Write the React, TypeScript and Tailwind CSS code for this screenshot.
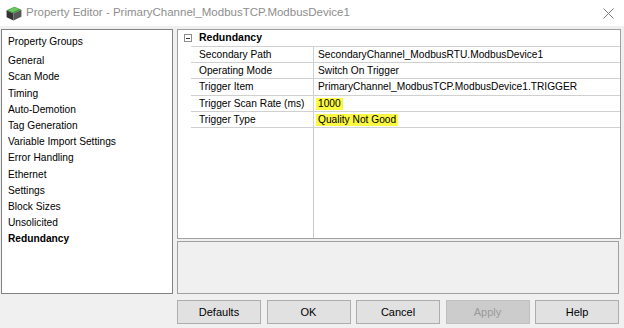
import React from 'react';

const groups = [
  'General',
  'Scan Mode',
  'Timing',
  'Auto-Demotion',
  'Tag Generation',
  'Variable Import Settings',
  'Error Handling',
  'Ethernet',
  'Settings',
  'Block Sizes',
  'Unsolicited',
  'Redundancy',
];

const rows: { name: string; value: string; mark?: boolean }[] = [
  { name: 'Secondary Path', value: 'SecondaryChannel_ModbusRTU.ModbusDevice1' },
  { name: 'Operating Mode', value: 'Switch On Trigger' },
  { name: 'Trigger Item', value: 'PrimaryChannel_ModbusTCP.ModbusDevice1.TRIGGER' },
  { name: 'Trigger Scan Rate (ms)', value: '1000', mark: true },
  { name: 'Trigger Type', value: 'Quality Not Good', mark: true },
];

function AppIcon() {
  return (
    <svg width="18" height="18" viewBox="0 0 17 17">
      <path d="M1.5 6 L9 2.5 L15.5 5.5 L8 9 Z" fill="#3f9a3a" />
      <path d="M1.5 6 L8 9 L8 15.5 L1.5 12.5 Z" fill="#333333" />
      <path d="M8 9 L15.5 5.5 L15.5 12 L8 15.5 Z" fill="#575757" />
      <path d="M2.8 5.8 L9 2.9 L13.5 5 L7.3 7.9 Z" fill="#6cc560" />
    </svg>
  );
}

function Btn({ label, disabled }: { label: string; disabled?: boolean }) {
  return (
    <div
      className={`w-[84px] h-[24px] flex items-center justify-center border text-[11px] ${
        disabled
          ? 'bg-[#cccccc] border-[#bfbfbf] text-[#9a9a9a]'
          : 'bg-[#e1e1e1] border-[#adadad] text-black'
      }`}
    >
      {label}
    </div>
  );
}

export default function App() {
  return (
    <div className="w-[624px] h-[328px] bg-[#f0f0f0] overflow-hidden font-['Liberation_Sans',Arial,sans-serif] text-black">
      {/* title bar */}
      <div className="h-[26px] bg-white flex items-center pl-[5px] pr-[10px]">
        <AppIcon />
        <span className="ml-[3px] text-[11.5px] text-[#8e8e8e]">
          Property Editor - PrimaryChannel_ModbusTCP.ModbusDevice1
        </span>
        <svg className="ml-auto" width="11" height="11" viewBox="0 0 11 11">
          <path d="M0.5 0.5 L10.5 10.5 M10.5 0.5 L0.5 10.5" stroke="#7a7a7a" strokeWidth="1" />
        </svg>
      </div>

      <div className="flex pt-[3px] pl-[1px]">
        {/* left: property groups */}
        <div className="w-[172px] h-[265px] bg-white border border-[#828282] pl-[6px] pt-[4px] text-[10.2px]">
          <div className="leading-[16.2px]">Property Groups</div>
          <div className="mt-[3px]">
            {groups.map(g => (
              <div key={g} className={`leading-[16.2px] ${g === 'Redundancy' ? 'font-bold' : ''}`}>
                {g}
              </div>
            ))}
          </div>
        </div>

        {/* right: grid + description */}
        <div className="ml-[4px] w-[444px] flex flex-col">
          <div className="h-[210px] bg-white border border-[#a0a0a0] text-[10.2px] flex flex-col">
            <div className="h-[16px] flex items-center">
              <div className="w-[20px] flex justify-center">
                <div className="w-[8px] h-[8px] border border-[#8c8c8c] flex items-center justify-center">
                  <div className="w-[4px] h-px bg-[#333]" />
                </div>
              </div>
              <span className="font-bold pl-[1px] text-[10.5px]">Redundancy</span>
            </div>
            <div className="flex flex-1">
              <div className="w-[13px]" />
              <div className="flex-1 flex flex-col">
                {rows.map(r => (
                  <div key={r.name} className="h-[16.2px] flex border-t border-[#d0d0d0]">
                    <div className="w-[123px] border-r border-[#d0d0d0] pl-[8px] leading-[15px]">{r.name}</div>
                    <div className="flex-1 pl-[2px] leading-[15px]">
                      {r.mark ? (
                        <span className="bg-[#fbf941] px-[2px] pb-[1px]">{r.value}</span>
                      ) : (
                        <span className="pl-[2px]">{r.value}</span>
                      )}
                    </div>
                  </div>
                ))}
                <div className="flex-1 flex border-t border-[#d0d0d0]">
                  <div className="w-[123px] border-r border-[#c8c8c8]" />
                </div>
              </div>
            </div>
          </div>
          <div className="mt-[2px] h-[53px] border border-[#a0a0a0] bg-[#f0f0f0] mr-[2px]" />
        </div>
      </div>

      {/* buttons */}
      <div className="flex gap-[5.5px] pl-[177px] mt-[6px]">
        <Btn label="Defaults" />
        <Btn label="OK" />
        <Btn label="Cancel" />
        <Btn label="Apply" disabled />
        <Btn label="Help" />
      </div>
    </div>
  );
}
